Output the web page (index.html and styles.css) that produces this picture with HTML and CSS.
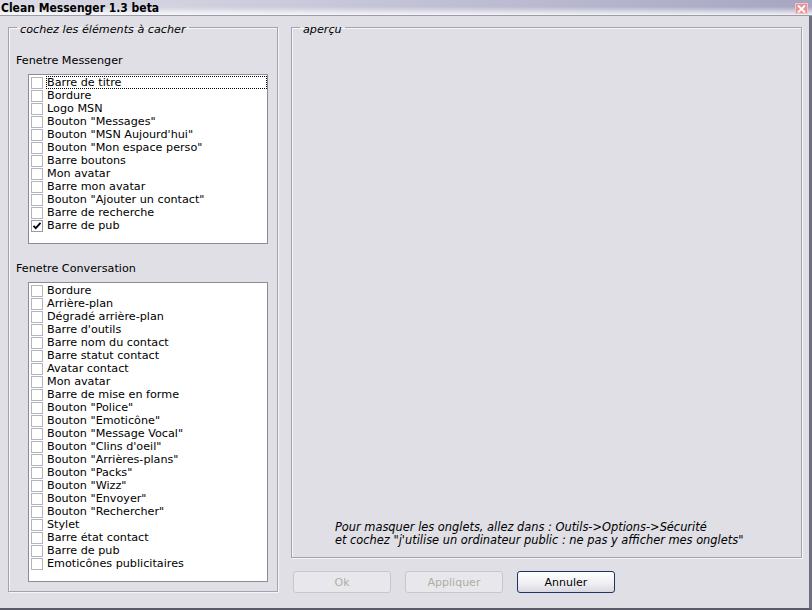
FILE: index.html
```html
<!DOCTYPE html>
<html lang="fr">
<head>
<meta charset="utf-8">
<title>Clean Messenger 1.3 beta</title>
<link rel="stylesheet" href="styles.css">
</head>
<body>
<div class="window">
  <div class="titlebar">
    <span class="title">Clean Messenger 1.3 beta</span>
    <span class="close"><svg width="9" height="8" viewBox="0 0 9 8"><path d="M1 0.5 L8 7.5 M8 0.5 L1 7.5" stroke="#fff" stroke-width="1.8"/></svg></span>
  </div>
  <div class="main">
    <fieldset class="group left">
      <legend>cochez les éléments à cacher</legend>
      <div class="label">Fenetre Messenger</div>
      <div class="listbox lb1">
        <div class="item focus"><span class="cb"></span><span class="txt">Barre de titre</span></div>
        <div class="item"><span class="cb"></span><span class="txt">Bordure</span></div>
        <div class="item"><span class="cb"></span><span class="txt">Logo MSN</span></div>
        <div class="item"><span class="cb"></span><span class="txt">Bouton "Messages"</span></div>
        <div class="item"><span class="cb"></span><span class="txt">Bouton "MSN Aujourd'hui"</span></div>
        <div class="item"><span class="cb"></span><span class="txt">Bouton "Mon espace perso"</span></div>
        <div class="item"><span class="cb"></span><span class="txt">Barre boutons</span></div>
        <div class="item"><span class="cb"></span><span class="txt">Mon avatar</span></div>
        <div class="item"><span class="cb"></span><span class="txt">Barre mon avatar</span></div>
        <div class="item"><span class="cb"></span><span class="txt">Bouton "Ajouter un contact"</span></div>
        <div class="item"><span class="cb"></span><span class="txt">Barre de recherche</span></div>
        <div class="item"><span class="cb checked"><svg width="10" height="10" viewBox="0 0 10 10"><path d="M1.5 4.8 L3.8 7.2 L8.5 1.8" fill="none" stroke="#000" stroke-width="1.8"/></svg></span><span class="txt">Barre de pub</span></div>
      </div>
      <div class="label second">Fenetre Conversation</div>
      <div class="listbox lb2">
        <div class="item"><span class="cb"></span><span class="txt">Bordure</span></div>
        <div class="item"><span class="cb"></span><span class="txt">Arrière-plan</span></div>
        <div class="item"><span class="cb"></span><span class="txt">Dégradé arrière-plan</span></div>
        <div class="item"><span class="cb"></span><span class="txt">Barre d'outils</span></div>
        <div class="item"><span class="cb"></span><span class="txt">Barre nom du contact</span></div>
        <div class="item"><span class="cb"></span><span class="txt">Barre statut contact</span></div>
        <div class="item"><span class="cb"></span><span class="txt">Avatar contact</span></div>
        <div class="item"><span class="cb"></span><span class="txt">Mon avatar</span></div>
        <div class="item"><span class="cb"></span><span class="txt">Barre de mise en forme</span></div>
        <div class="item"><span class="cb"></span><span class="txt">Bouton "Police"</span></div>
        <div class="item"><span class="cb"></span><span class="txt">Bouton "Emoticône"</span></div>
        <div class="item"><span class="cb"></span><span class="txt">Bouton "Message Vocal"</span></div>
        <div class="item"><span class="cb"></span><span class="txt">Bouton "Clins d'oeil"</span></div>
        <div class="item"><span class="cb"></span><span class="txt">Bouton "Arrières-plans"</span></div>
        <div class="item"><span class="cb"></span><span class="txt">Bouton "Packs"</span></div>
        <div class="item"><span class="cb"></span><span class="txt">Bouton "Wizz"</span></div>
        <div class="item"><span class="cb"></span><span class="txt">Bouton "Envoyer"</span></div>
        <div class="item"><span class="cb"></span><span class="txt">Bouton "Rechercher"</span></div>
        <div class="item"><span class="cb"></span><span class="txt">Stylet</span></div>
        <div class="item"><span class="cb"></span><span class="txt">Barre état contact</span></div>
        <div class="item"><span class="cb"></span><span class="txt">Barre de pub</span></div>
        <div class="item"><span class="cb"></span><span class="txt">Emoticônes publicitaires</span></div>
      </div>
    </fieldset>
    <div class="rightcol">
      <fieldset class="group preview">
        <legend>aperçu</legend>
        <div class="preview-body">
          <div class="note">
            <div>Pour masquer les onglets, allez dans : Outils-&gt;Options-&gt;Sécurité</div>
            <div>et cochez "j'utilise un ordinateur public : ne pas y afficher mes onglets"</div>
          </div>
        </div>
      </fieldset>
      <div class="buttons">
        <button class="btn disabled">Ok</button>
        <button class="btn disabled">Appliquer</button>
        <button class="btn primary">Annuler</button>
      </div>
    </div>
  </div>
</div>
</body>
</html>
```

FILE: styles.css
```css
html, body {
  margin: 0;
  padding: 0;
}
body {
  width: 812px;
  height: 610px;
  overflow: hidden;
  background: #dfdfe5;
  font-family: "DejaVu Sans", Verdana, sans-serif;
  font-size: 11.2px;
  color: #000;
}
.window {
  width: 812px;
  height: 610px;
  box-sizing: border-box;
  display: flex;
  flex-direction: column;
  border-right: 3px solid #6e6e7c;
  border-bottom: 2px solid #5a5a68;
  background: #dfdfe5;
}
.titlebar {
  height: 15px;
  flex: none;
  display: flex;
  align-items: center;
  justify-content: space-between;
  background:
    linear-gradient(to bottom, rgba(255,255,255,0) 0%, rgba(255,255,255,0) 45%, rgba(255,255,255,0.85) 100%),
    linear-gradient(to right, #dcdce6 0%, #c8c8da 40%, #a6a6c2 100%);
  border-bottom: 1px solid #9c9ca8;
  margin-right: -3px;
}
.title {
  font-family: "DejaVu Sans Condensed", "DejaVu Sans", sans-serif;
  font-weight: bold;
  font-size: 12px;
  padding-left: 1px;
  color: #000;
}
.close {
  width: 13px;
  height: 11px;
  margin-right: 4px;
  margin-top: 2px;
  background: #e7959a;
  border: 1px solid #f4c4c6;
  box-sizing: border-box;
  display: flex;
  align-items: center;
  justify-content: center;
}
.close svg { display: block; }
.main {
  flex: 1;
  display: flex;
  padding: 5px 7px 0 8px;
  gap: 13px;
}
.group {
  margin: 0;
  border: 1px solid #a3a3ad;
  box-shadow: inset 1px 1px 0 #f6f6f8, 1px 1px 0 #f6f6f8;
  min-width: 0;
}
.group legend {
  font-style: italic;
  padding: 0 3px;
  line-height: 13px;
  position: relative;
  top: 2px;
}
.left {
  width: 271px;
  height: 571px;
  box-sizing: border-box;
  padding: 20px 10px 0 7px;
  display: flex;
  flex-direction: column;
}
.left legend { margin-left: 1px; }
.label {
  line-height: 13px;
  margin-bottom: 7px;
}
.label.second {
  margin-top: 18px;
}
.listbox {
  margin-left: 12px;
  width: 240px;
  box-sizing: border-box;
  background: #fff;
  border: 1px solid #8c8c98;
  padding: 1px 0 0 1px;
}
.lb1 { height: 170px; }
.lb2 { height: 300px; }
.item {
  height: 13px;
  display: flex;
  align-items: center;
  white-space: nowrap;
}
.cb {
  width: 12px;
  height: 12px;
  box-sizing: border-box;
  border: 1px solid #b4b4bc;
  background: #fff;
  margin-left: 1px;
  margin-right: 3px;
  display: flex;
  align-items: center;
  justify-content: center;
  flex: none;
}
.cb.checked { border-color: #9a9aa4; }
.cb svg { display: block; }
.txt {
  line-height: 13px;
  padding-left: 1px;
  flex: 1;
  height: 13px;
  box-sizing: border-box;
}
.focus .txt {
  outline: 1px dotted #000;
  outline-offset: -1px;
}
.rightcol {
  flex: 1;
  display: flex;
  flex-direction: column;
}
.preview {
  width: 509px;
  padding: 0;
}
.preview legend { margin-left: 8px; }
.preview-body {
  height: 523px;
  display: flex;
  flex-direction: column;
  justify-content: flex-end;
  padding: 0 0 10px 43px;
  box-sizing: border-box;
}
.note {
  font-style: italic;
  font-size: 11.4px;
  line-height: 13px;
}
.buttons {
  display: flex;
  gap: 14px;
  margin-top: 13px;
  padding-left: 2px;
}
.btn {
  width: 98px;
  height: 22px;
  font-family: "DejaVu Sans", Verdana, sans-serif;
  font-size: 11px;
  border-radius: 3px;
  padding: 0;
}
.btn.disabled {
  background: #e8e8ec;
  border: 1px solid #c8c8cc;
  color: #aeaea4;
}
.btn.primary {
  background: linear-gradient(to bottom, #ffffff 0%, #f0f0f4 55%, #d8d8e2 100%);
  border: 1px solid #1c3462;
  color: #000;
}
```
